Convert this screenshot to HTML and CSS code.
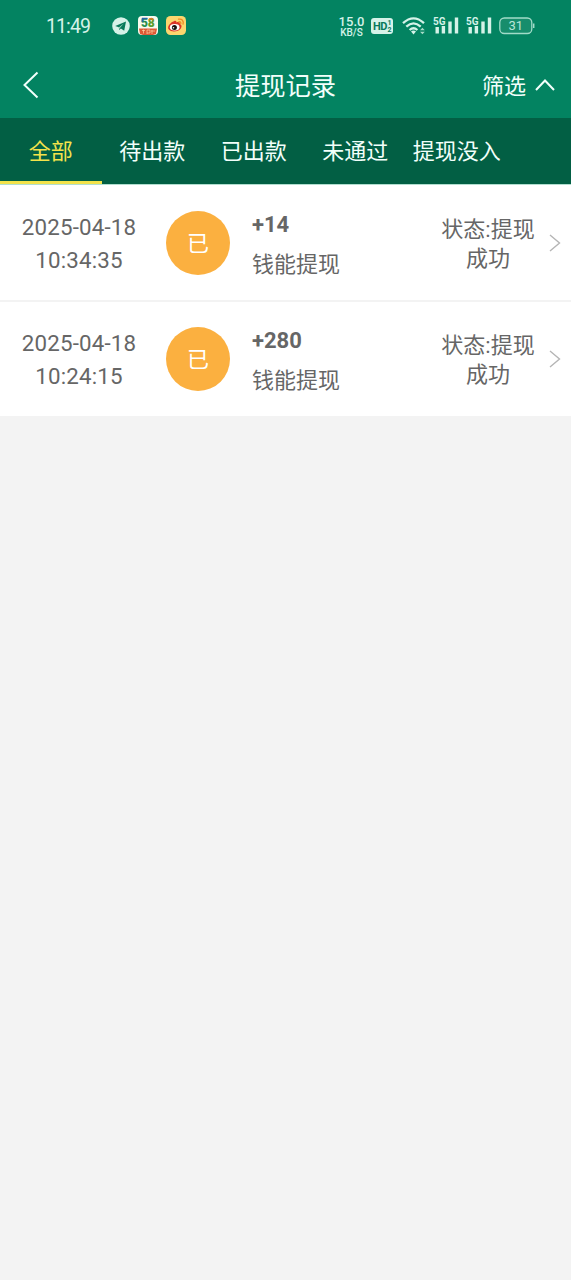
FILE: index.html
```html
<!DOCTYPE html>
<html lang="zh-CN">
<head>
<meta charset="utf-8">
<meta name="viewport" content="width=device-width">
<title>提现记录</title>
<link rel="stylesheet" href="styles.css">
</head>
<body>
<header class="top">
  <div class="status-bar">
    <span class="clock">11:49</span>
    <div class="apps">
      <svg width="18" height="18" viewBox="0 0 18 18"><circle cx="9" cy="9" r="8.8" fill="#d5f2e8"/><path d="M3.2 8.9 14 4.5 12.2 13.8 8.9 11.5 7.2 13 6.8 10.2Z" fill="#08795a"/><path d="M7 10.2 11.8 6.4 8.1 10.7 7.3 12.6Z" fill="#a5d8c7"/></svg>
      <svg width="20" height="20" viewBox="0 0 20 20"><rect width="20" height="19" rx="4" fill="#f7fbef"/><g class="badge-number"><text x="3" y="11" fill="#2a8f50">5</text><text x="9.800" y="11" fill="#5a9d2c">8</text></g><path d="M4 2.600h5.500M4.300 2.600v3.500" stroke="#2864a8" stroke-width="1.500" fill="none"/><path d="M11 4q2.300-3 4.500 0" stroke="#e17822" stroke-width="1.400" fill="none"/><path d="M1 12.500h18l-1 5.500-3 1H5l-3-1Z" fill="#dd5935"/><path d="M4 14.500h3M5.500 13.500v4M9 14v4M9 14h3v3H9M14 14v4M13 15h4" stroke="#ffd2a4" stroke-width=".7" fill="none"/></svg>
      <svg width="20" height="20" viewBox="0 0 20 20"><rect width="20" height="19" rx="4.5" fill="#fbd66e"/><path d="M8 5.2c2-1 2.600.1 2.300 1.300 2.600-1 4 0 3.500 1.600 2 .7 2.300 2.600 1 4.400-2 3.300-9.500 4-12 1.100C.5 10.900 4.500 6.200 8 5.200Z" fill="#db3528"/><ellipse cx="8.700" cy="11.300" rx="4.800" ry="3.200" fill="#fff"/><circle cx="8.400" cy="11.600" r="2.500" fill="#17120f"/><circle cx="7.500" cy="11.800" r=".8" fill="#fff"/><path d="M12.500 3.200c3.500-.8 5.500 2 4.500 5M12.800 5.800c1.600-.3 2.300.6 2 1.900" fill="none" stroke="#ed8b26" stroke-width="1.300" stroke-linecap="round"/></svg>
    </div>
    <div class="signals">
      <div class="speed"><span class="speed-value">15.0</span><span class="speed-unit">KB/S</span></div>
      <svg class="hd" width="22" height="16" viewBox="0 0 22 16"><rect width="22" height="16" rx="3" fill="#d5f2e8"/><text x="2" y="12.300" class="hd-label">HD</text><text x="16.500" y="7.300" class="hd-index">1</text><text x="16.500" y="14" class="hd-index">2</text></svg>
      <svg class="wifi" width="24" height="20" viewBox="0 0 24 20"><g fill="none" stroke="#d5f2e8" stroke-width="2.300"><path d="M1 7.200Q11.500-2.500 22 7.200"/><path d="M4.300 10.700Q11.500 4 18.700 10.700"/><path d="M7.600 14Q11.500 10.500 15.400 14"/></g><path d="M9 15.400Q11.500 13.700 14 15.400L11.500 18.500Z" fill="#d5f2e8"/><path d="M18 14.200 20.400 11.800 22.800 14.200ZM18 15.800 20.400 18.200 22.800 15.800Z" fill="#a6dbc8"/></svg>
      <svg class="cell" width="26" height="20" viewBox="0 0 26 20"><text x="0" y="8.800" class="cell-label" textLength="12.500" lengthAdjust="spacingAndGlyphs">5G</text><path d="M2.500 11h3.400v6.500H2.500ZM8.700 10h3.400v7.500H8.700ZM15.300 5.500h3.400v12h-3.400ZM21.800 1.500h3.400v16h-3.400Z" fill="#d5f2e8"/></svg>
      <svg class="cell" width="26" height="20" viewBox="0 0 26 20"><text x="0" y="8.800" class="cell-label" textLength="12.500" lengthAdjust="spacingAndGlyphs">5G</text><path d="M2.500 11h3.400v6.500H2.500ZM8.700 10h3.400v7.500H8.700ZM15.300 5.500h3.400v12h-3.400ZM21.800 1.500h3.400v16h-3.400Z" fill="#d5f2e8"/></svg>
      <svg class="battery" width="36" height="18" viewBox="0 0 36 18"><rect x=".8" y="1" width="32" height="15.500" rx="4.500" fill="#178d6c" stroke="#a1dbc8" stroke-width="1.300"/><path d="M34.700 6.500v4.500" stroke="#a1dbc8" stroke-width="1.500"/><text x="16.800" y="13.300" class="battery-label">31</text></svg>
    </div>
  </div>
  <nav class="nav-bar">
    <svg class="back" width="16" height="28" viewBox="0 0 16 28"><path d="M14.500 1.500 1.500 14 14.500 26.500" fill="none" stroke="#f2fffb" stroke-width="2"/></svg>
    <h1 class="title">提现记录</h1>
    <div class="filter"><span class="filter-text">筛选</span><svg width="20" height="14" viewBox="0 0 20 14"><path d="M1 12 10 2.500 19 12" fill="none" stroke="#f2fffb" stroke-width="2"/></svg></div>
  </nav>
</header>
<div class="tabs">
  <div class="tab active">全部</div>
  <div class="tab">待出款</div>
  <div class="tab">已出款</div>
  <div class="tab">未通过</div>
  <div class="tab">提现没入</div>
</div>
<main class="records">
  <article class="record">
    <time class="date">2025-04-18<br>10:34:35</time>
    <div class="avatar">已</div>
    <div class="detail"><strong class="amount">+14</strong><span class="kind">钱能提现</span></div>
    <div class="state">状态:提现<br>成功</div>
    <svg class="arrow" width="12" height="18" viewBox="0 0 12 18"><path d="M1 1 10.500 9 1 17" fill="none" stroke="#b5b5b5" stroke-width="1.400"/></svg>
  </article>
  <article class="record">
    <time class="date">2025-04-18<br>10:24:15</time>
    <div class="avatar">已</div>
    <div class="detail"><strong class="amount">+280</strong><span class="kind">钱能提现</span></div>
    <div class="state">状态:提现<br>成功</div>
    <svg class="arrow" width="12" height="18" viewBox="0 0 12 18"><path d="M1 1 10.500 9 1 17" fill="none" stroke="#b5b5b5" stroke-width="1.400"/></svg>
  </article>
</main>
</body>
</html>
```
FILE: styles.css
```css
* { box-sizing: border-box; }
body {
  margin: 0;
  min-height: 1280px;
  background: #f3f3f3;
  color: #666;
  font-family: Roboto, "Noto Sans CJK SC", sans-serif;
  font-size: 22px;
}
svg { display: block; flex: none; }
.top { height: 118px; background: #038361; color: #f2fffb; }
.status-bar {
  display: flex;
  align-items: center;
  height: 52px;
  padding: 0 36px 0 46px;
  color: #d5f2e8;
}
.clock { width: 66px; padding-top: 2px; font-size: 19.5px; line-height: 24px; letter-spacing: -.9px; }
.apps { display: flex; align-items: center; gap: 8px; }
.badge-number { font: 900 12px Roboto, sans-serif; }
.signals { display: flex; align-items: center; margin-left: auto; }
.speed { display: flex; flex-direction: column; align-items: center; width: 25px; margin-right: 7px; font-weight: 500; }
.speed-value { font-size: 13px; line-height: 13px; }
.speed-unit { font-size: 10px; line-height: 10px; }
.hd { margin-right: 9px; }
.hd-label { font: 700 11px Roboto, sans-serif; letter-spacing: -.5px; fill: #08795a; }
.hd-index { font: 700 7px Roboto, sans-serif; fill: #08795a; }
.wifi { margin-right: 7px; }
.cell { margin-right: 7px; }
.cell-label { font: 700 11px Roboto, sans-serif; fill: #d5f2e8; }
.battery-label { font: 400 13px Roboto, sans-serif; text-anchor: middle; fill: #b9e5d6; }
.nav-bar {
  display: grid;
  grid-template-columns: 1fr auto 1fr;
  align-items: center;
  height: 66px;
  padding: 0 16px 0 23px;
}
.title { margin: 0; padding: 3px 7px 0 0; font-size: 25.3px; font-weight: 400; line-height: 38px; }
.filter { display: flex; align-items: center; justify-content: flex-end; gap: 9px; line-height: 32px; }
.filter-text { padding-top: 3px; }
.tabs { display: flex; height: 66px; background: #025f44; color: #f2fffb; }
.tab { flex: 0 0 101.5px; height: 66px; line-height: 67px; text-align: center; white-space: nowrap; }
.tab.active { border-bottom: 3px solid #f3e34b; color: #f3e34b; }
.records { border-top: 1px solid #b1decf; background: #fff; }
.record {
  display: flex;
  align-items: center;
  height: 117px;
  padding: 1px 10px 0 0;
  border-bottom: 2px solid #f3f3f3;
}
.record:last-child { height: 114px; padding-top: 0; border-bottom: 0; }
.date { width: 158px; padding-top: 1px; font-size: 22.3px; line-height: 32.5px; letter-spacing: .2px; text-align: center; }
.avatar {
  width: 64px;
  height: 64px;
  margin-left: 8px;
  border-radius: 50%;
  background: #fbb040;
  color: #fff;
  line-height: 65px;
  text-align: center;
}
.detail { display: flex; flex-direction: column; margin-left: 22px; padding-top: 6px; }
.amount { font-size: 22px; line-height: 36px; }
.kind { line-height: 43px; }
.state { width: 96px; margin-left: auto; margin-right: 13px; padding-top: 2px; line-height: 29px; text-align: center; }
```
